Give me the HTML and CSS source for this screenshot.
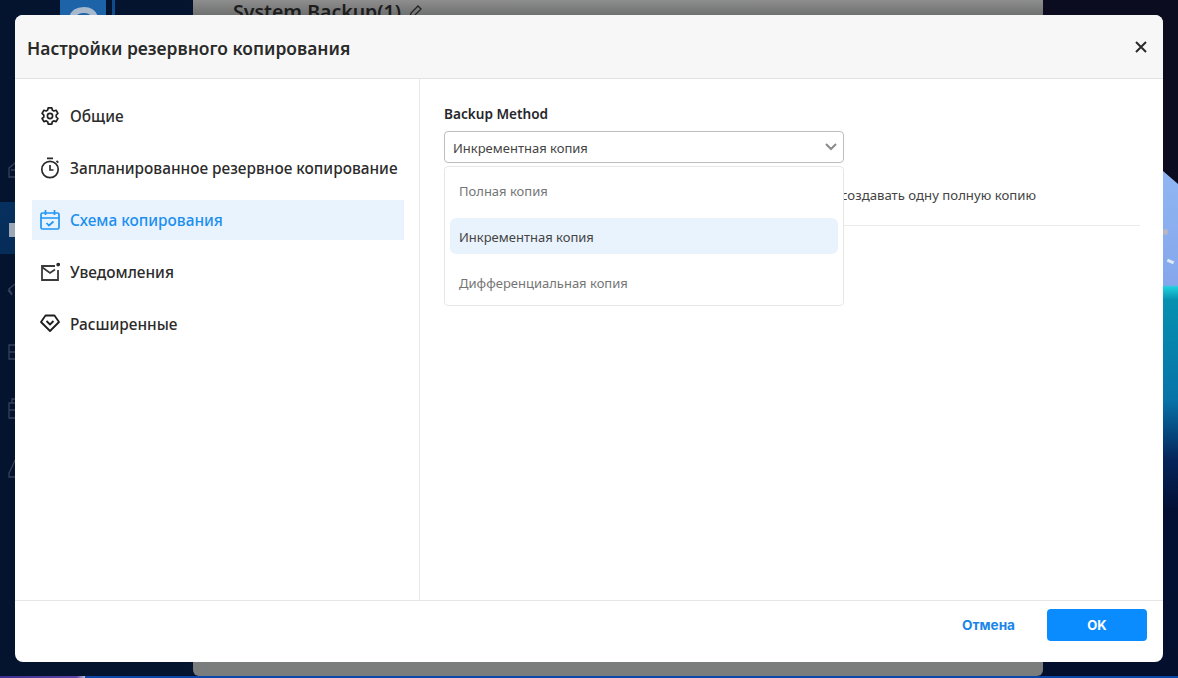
FILE: index.html
```html
<!DOCTYPE html>
<html lang="ru">
<head>
<meta charset="utf-8">
<title>Настройки резервного копирования</title>
<link rel="stylesheet" href="styles.css">
</head>
<body>
<div class="desktop">
  <div class="wall-art"></div>
  <div class="wall-plane"></div>
  <div class="wall-star"></div>
  <div class="wall-jet"></div>
  <div class="task-left"></div>
  <div class="task-right"></div>
  <div class="rail-active"></div>
  <div class="rail-mark"></div>
  <svg class="rail-icons" width="15" height="360" viewBox="0 0 15 360" fill="none" stroke="#465068" stroke-width="1.3">
    <path d="M15 23l-6 5v9h6M11 30h4"/>
    <path d="M15 144l-6 5 3 5M8 150l4 5"/>
    <path d="M15 205H9v14h6M9 212h6"/>
    <path d="M15 263H9v15h6M9 270h6M12 263v-4h3"/>
    <path d="M15 320l-3 7-3 6v4h6"/>
  </svg>
  <div class="app-tile"><svg width="46" height="15" viewBox="0 0 46 15" fill="none"><path d="M12 17c1-7 6-9 12-9 5 0 9 2 11 7" stroke="#a9b9cd" stroke-width="6"/></svg></div>
  <div class="app-line"></div>
  <div class="back-window">
    <div class="back-title">System Backup(1)
      <svg width="16" height="16" viewBox="0 0 16 16" fill="none" stroke="#222" stroke-width="1.3"><path d="M3 13l1-4 7-7 3 3-7 7z"/></svg>
    </div>
  </div>
  <div class="back-window-bottom"></div>
</div>

<main class="dialog">
  <header class="dialog-head">
    <h1 class="dialog-title">Настройки резервного копирования</h1>
    <button class="close" type="button" aria-label="Закрыть">
      <svg width="12" height="12" viewBox="0 0 12 12" fill="none" stroke="#2b2b2b" stroke-width="2"><path d="M1 1l10 10M11 1L1 11"/></svg>
    </button>
  </header>

  <div class="dialog-body">
    <nav class="side">
      <a class="side-item">
        <svg class="side-icon" width="20" height="20" viewBox="0 0 20 20" fill="none" stroke="#222" stroke-width="1.7" stroke-linejoin="round"><circle cx="10" cy="10" r="2.6"/><path d="M8.2 1.8h3.6l.5 2.3 1.5.9 2.3-.7 1.8 3.1-1.7 1.6v1.900l1.700 1.600-1.800 3.100-2.300-.7-1.500.9-.5 2.300H8.200l-.5-2.300-1.500-.9-2.300.7-1.800-3.100L3.800 11V9.100L2.100 7.400l1.800-3.100 2.300.7 1.500-.9z"/></svg>
        <span>Общие</span>
      </a>
      <a class="side-item">
        <svg class="side-icon" width="20" height="22" viewBox="0 0 20 22" fill="none" stroke="#2b2b2b" stroke-width="1.7"><circle cx="10" cy="12.500" r="8.200"/><path d="M7 1.300h6M10 8v5h3.500M16.500 3.800l1.800 1.800"/></svg>
        <span>Запланированное резервное копирование</span>
      </a>
      <a class="side-item active">
        <svg class="side-icon" width="20" height="20" viewBox="0 0 20 20" fill="none" stroke="#2196f3" stroke-width="1.700"><rect x="1" y="3" width="18" height="16" rx="1.500"/><path d="M1 8h18M5.500 0v5M14.500 0v5M6.500 13l2.500 2.500 4.500-4"/></svg>
        <span>Схема копирования</span>
      </a>
      <a class="side-item">
        <svg class="side-icon" width="20" height="20" viewBox="0 0 20 20" fill="none" stroke="#3a3a3a" stroke-width="1.800"><path d="M15 4H2v14h16V8M2.500 5.500L10 11l5-3.500"/><circle cx="18.200" cy="2.600" r="1.900" fill="#2b2b2b" stroke="none"/></svg>
        <span>Уведомления</span>
      </a>
      <a class="side-item">
        <svg class="side-icon" width="20" height="20" viewBox="0 0 20 20" fill="none" stroke="#1f1f1f" stroke-width="1.800" stroke-linejoin="round"><path d="M5.500 1.500h9L19 8l-9 9-9-9z"/><path d="M6.500 7l3.500 3.500L13.500 7"/></svg>
        <span>Расширенные</span>
      </a>
    </nav>

    <section class="pane">
      <div class="field-label">Backup Method</div>
      <div class="select">
        <span class="select-value">Инкрементная копия</span>
        <svg width="12" height="8" viewBox="0 0 12 8" fill="none" stroke="#8a8a8a" stroke-width="2"><path d="M1 1l5 5 5-5"/></svg>
      </div>
      <div class="option-note">создавать одну полную копию</div>
      <div class="rule"></div>
      <div class="peek"></div>

      <ul class="menu">
        <li class="menu-item">Полная копия</li>
        <li class="menu-item selected">Инкрементная копия</li>
        <li class="menu-item">Дифференциальная копия</li>
      </ul>
    </section>
  </div>

  <footer class="dialog-foot">
    <button class="btn-link" type="button">Отмена</button>
    <button class="btn-primary" type="button">OK</button>
  </footer>
</main>
</body>
</html>
```

FILE: styles.css
```css
* { box-sizing: border-box; }

html, body {
  margin: 0;
  height: 100%;
  overflow: hidden;
}

body {
  padding: 15px 15px 16px;
  background: #03102b;
  font-family: "Noto Sans", "Open Sans", sans-serif;
  color: #2b2b2b;
}

/* Blurred desktop behind the modal */
.desktop {
  position: absolute;
  inset: 0;
  overflow: hidden;
  background: linear-gradient(90deg, #04142f 0, #061330 100%);
}
.wall-art {
  position: absolute;
  left: 1043px;
  top: 0;
  right: 0;
  height: 678px;
  background: linear-gradient(180deg, #0d0d22 0, #14112a 170px, #8fb6f2 171px, #85a6ec 285px, #1fd0dc 287px, #0590b0 300px, #0773a8 400px, #04245a 460px, #031034 510px, #030f2c 678px);
}
.wall-plane {
  position: absolute;
  left: 1043px;
  top: 0;
  width: 135px;
  height: 184px;
  background: #0c0c20;
  clip-path: polygon(0 0, 100% 0, 100% 100%, 120px 171px, 0 100px);
}
.wall-star {
  position: absolute;
  left: 1163px;
  top: 229px;
  width: 5px;
  height: 6px;
  border-radius: 50%;
  background: #b9b6c4;
}
.wall-jet {
  position: absolute;
  left: 1167px;
  top: 260px;
  width: 7px;
  height: 3px;
  transform: rotate(25deg);
  background: #dfeaf8;
}
.task-left {
  position: absolute;
  left: 0;
  bottom: 0;
  width: 85px;
  height: 2px;
  background: linear-gradient(90deg, #3c2f8f, #5d45a8 90%, #c0c0d8);
}
.task-right {
  position: absolute;
  left: 85px;
  right: 0;
  bottom: 0;
  height: 2px;
  background: #0a47a8;
}
.rail-active {
  position: absolute;
  left: 0;
  top: 202px;
  width: 15px;
  height: 52px;
  background: linear-gradient(180deg, #06305f, #062c58);
}
.rail-mark {
  position: absolute;
  left: 9px;
  top: 223px;
  width: 6px;
  height: 14px;
  background: #9da8b6;
}
.rail-icons {
  position: absolute;
  left: 0;
  top: 140px;
  filter: blur(0.5px);
  opacity: 0.75;
}
.app-tile {
  position: absolute;
  left: 60px;
  top: 0;
  width: 46px;
  height: 15px;
  background: #1c63a8;
}
.app-line {
  position: absolute;
  left: 112px;
  top: 0;
  width: 3px;
  height: 15px;
  background: #0f4c8e;
}
.back-window {
  position: absolute;
  left: 193px;
  top: 0;
  width: 850px;
  height: 15px;
  overflow: hidden;
  background: linear-gradient(180deg, #8e8e8e, #6f7070);
}
.back-title {
  display: flex;
  align-items: center;
  gap: 6px;
  margin: 0 0 0 40px;
  font-size: 19.5px;
  line-height: 24px;
  font-weight: 600;
  color: #1d1d1d;
}
.back-window-bottom {
  position: absolute;
  left: 193px;
  top: 662px;
  width: 850px;
  height: 14px;
  border-radius: 0 0 6px 6px;
  background: #7b7d7c;
}

/* Modal */
.dialog {
  position: relative;
  display: flex;
  flex-direction: column;
  width: 1148px;
  height: 647px;
  border-radius: 8px;
  overflow: hidden;
  background: #fff;
}
.dialog-head {
  display: flex;
  align-items: center;
  justify-content: space-between;
  flex: 0 0 64px;
  padding: 0 16px 0 12px;
  background: #f7f7f7;
  border-bottom: 1px solid #e3e3e3;
}
.dialog-title {
  margin: 2px 0 0;
  font-size: 17.45px;
  line-height: 24px;
  font-weight: 600;
  color: #2a2a2a;
}
.close {
  display: flex;
  padding: 0;
  border: 0;
  background: none;
}
.dialog-body {
  display: flex;
  flex: 1;
  min-height: 0;
}
.side {
  flex: 0 0 405px;
  display: flex;
  flex-direction: column;
  gap: 12px;
  padding: 17px 15px 0 17px;
  border-right: 1px solid #e8e8e8;
}
.side-item {
  display: flex;
  align-items: center;
  gap: 10px;
  height: 40px;
  padding-left: 8px;
  font-size: 15.4px;
  font-weight: 500;
  color: #2b2b2b;
}
.side-item.active {
  background: #e9f3fd;
  color: #1b8ff0;
}
.side-icon {
  flex: none;
}
.pane {
  position: relative;
  flex: 1;
  padding: 26px 23px 0 24px;
}
.field-label {
  font-size: 13.6px;
  line-height: 18px;
  font-weight: 600;
  color: #26262b;
}
.select {
  display: flex;
  align-items: center;
  justify-content: space-between;
  width: 400px;
  height: 32px;
  margin-top: 8px;
  padding: 0 6px 0 8px;
  border: 1px solid #bdbdbd;
  border-radius: 4px;
  font-size: 13px;
  color: #444;
}
.select-value {
  padding-top: 2px;
}
.option-note {
  margin-top: 23px;
  padding-left: 397px;
  font-size: 13.2px;
  line-height: 18px;
  color: #444;
}
.rule {
  height: 1px;
  margin-top: 21px;
  background: #ececec;
}
.peek {
  width: 2px;
  height: 8px;
  margin-top: 28px;
  background: #8a8a8a;
}
.menu {
  position: absolute;
  left: 24px;
  top: 87px;
  width: 400px;
  height: 140px;
  margin: 0;
  padding: 5px;
  display: flex;
  flex-direction: column;
  gap: 10px;
  list-style: none;
  background: #fff;
  border: 1px solid #e6e6e6;
  border-radius: 4px;
}
.menu-item {
  display: flex;
  align-items: center;
  height: 36px;
  padding: 2px 0 0 9px;
  font-size: 13px;
  color: #757575;
  border-radius: 6px;
}
.menu-item.selected {
  background: #e9f3fd;
  color: #444;
}
.dialog-foot {
  display: flex;
  align-items: flex-start;
  justify-content: flex-end;
  gap: 32px;
  flex: 0 0 62px;
  padding: 8px 16px 0 0;
  border-top: 1px solid #e6e6e6;
}
.btn-link {
  height: 32px;
  padding: 0;
  border: 0;
  background: none;
  font: 700 13.6px "Inter", sans-serif;
  color: #1a86e8;
}
.btn-primary {
  width: 100px;
  height: 32px;
  border: 0;
  border-radius: 4px;
  background: #0a8cff;
  font: 700 13px "Inter", sans-serif;
  color: #fff;
}
```
